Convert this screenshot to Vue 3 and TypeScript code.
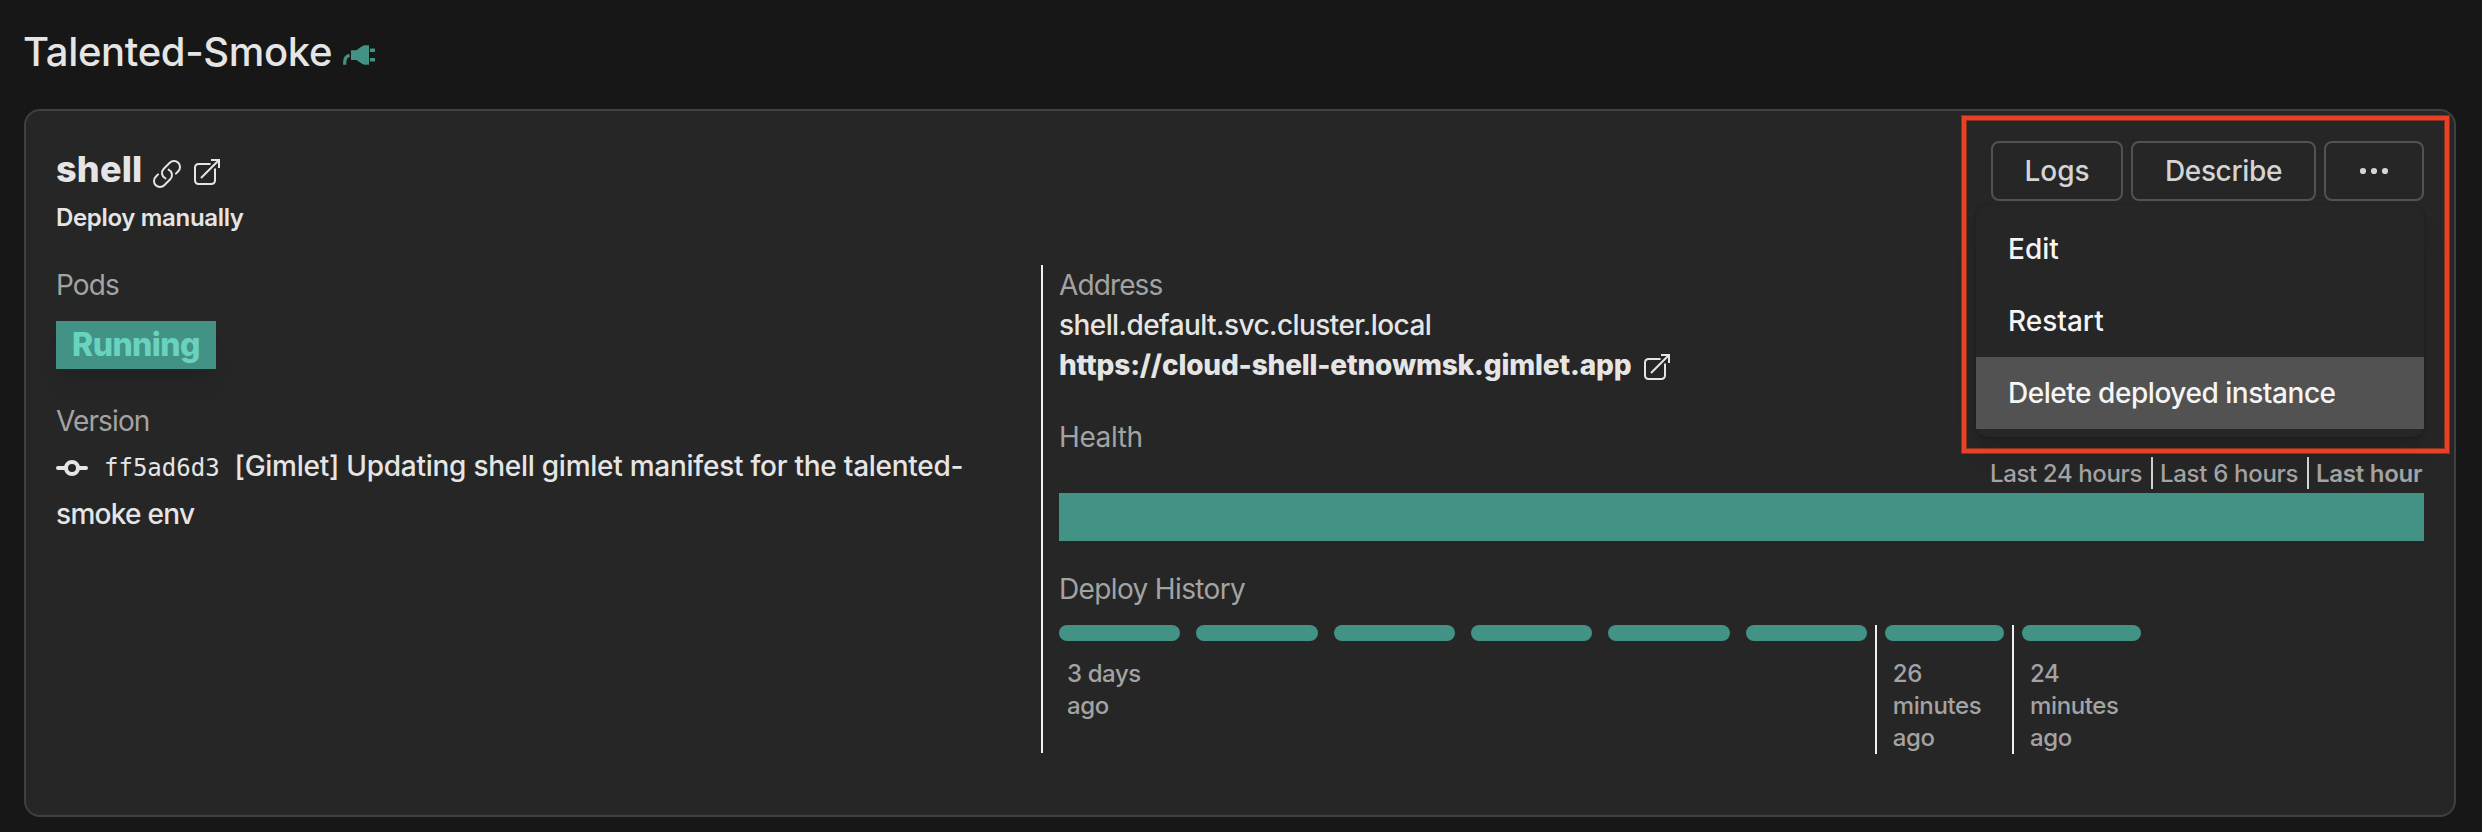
<script setup lang="ts">
interface Deploy {
  id: number
  label: string
  marked: boolean
}

const menuItems = ['Edit', 'Restart', 'Delete deployed instance'] as const
const activeItem = 'Delete deployed instance'

const ranges = [
  { label: 'Last 24 hours', cls: 'range-day' },
  { label: 'Last 6 hours', cls: 'range-six' },
  { label: 'Last hour', cls: 'range-hour' },
]

const deploys: Deploy[] = [
  { id: 1, label: '3 days ago', marked: false },
  { id: 2, label: '', marked: false },
  { id: 3, label: '', marked: false },
  { id: 4, label: '', marked: false },
  { id: 5, label: '', marked: false },
  { id: 6, label: '', marked: false },
  { id: 7, label: '26 minutes ago', marked: true },
  { id: 8, label: '24 minutes ago', marked: true },
]
</script>

<template>
  <main class="page">
    <header class="env">
      <h1 class="env-name">Talented-Smoke</h1>
      <svg class="plug" viewBox="0 0 32 20" width="32" height="20" aria-hidden="true">
        <path d="M1.7 19.8V17.4C1.7 13.4 3.6 11 6.6 10.4" fill="none" stroke="currentColor" stroke-width="3.2" />
        <path d="M8 5.2h5.4L19.4.9Q20.6.2 22 .2h4v19.6h-4q-1.4 0-2.6-.7L13.4 15H8z" fill="currentColor" />
        <path d="M27 3.4h5v3.6h-5zM27 13h5v3.6h-5z" fill="currentColor" />
      </svg>
    </header>

    <section class="card">
      <div class="card-head">
        <div>
          <div class="app-row">
            <h2 class="app-name">shell</h2>
            <svg class="icon-link" viewBox="0 0 24 24" width="32" height="32" aria-hidden="true">
              <path
                d="M13.19 8.688a4.5 4.5 0 0 1 1.242 7.244l-4.5 4.5a4.5 4.5 0 0 1-6.364-6.364l1.757-1.757m13.35-.622 1.757-1.757a4.5 4.5 0 0 0-6.364-6.364l-4.5 4.5a4.5 4.5 0 0 0 1.242 7.244"
                fill="none" stroke="currentColor" stroke-width="1.5" stroke-linecap="round" stroke-linejoin="round"
              />
            </svg>
            <svg class="icon-open" viewBox="0 0 26 26" width="26" height="26" aria-hidden="true">
              <path d="M16.5 5H4.5A3.5 3.5 0 0 0 1 8.5v13A3.5 3.5 0 0 0 4.5 25h13a3.5 3.5 0 0 0 3.5-3.5V9.5M7 19 25 1M17 1h8v8" />
            </svg>
          </div>
          <p class="policy">Deploy manually</p>
        </div>

        <div class="actions">
          <button class="btn btn-logs" type="button">Logs</button>
          <button class="btn btn-describe" type="button">Describe</button>
          <button class="btn btn-more" type="button" aria-label="More actions">
            <svg viewBox="0 0 30 8" width="30" height="8" aria-hidden="true">
              <circle cx="4" cy="4" r="3.1" fill="currentColor" />
              <circle cx="15" cy="4" r="3.1" fill="currentColor" />
              <circle cx="26" cy="4" r="3.1" fill="currentColor" />
            </svg>
          </button>
          <ul class="menu">
            <li v-for="item in menuItems" :key="item" class="menu-item" :class="{ active: item === activeItem }">
              {{ item }}
            </li>
          </ul>
        </div>
      </div>

      <div class="details">
        <div class="col-left">
          <h3 class="label t-pods">Pods</h3>
          <span class="status">Running</span>
          <h3 class="label t-version">Version</h3>
          <p class="version"><svg class="commit" viewBox="0 0 32 16" width="32" height="16" aria-hidden="true">
              <circle cx="16" cy="8" r="6" fill="none" stroke="currentColor" stroke-width="4" />
              <path d="M2 8h7M23 8h7" stroke="currentColor" stroke-width="4" stroke-linecap="round" />
            </svg><code class="sha">ff5ad6d3</code><span>[Gimlet] Updating shell gimlet manifest for the talented-<wbr /><span class="tail">smoke env</span></span></p>
        </div>

        <div class="col-right">
          <h3 class="label t-address">Address</h3>
          <p class="host">shell.default.svc.cluster.local</p>
          <p class="url">
            <span>https://cloud-shell-etnowmsk.gimlet.app</span>
            <svg class="icon-open" viewBox="0 0 26 26" width="26" height="26" aria-hidden="true">
              <path d="M16.5 5H4.5A3.5 3.5 0 0 0 1 8.5v13A3.5 3.5 0 0 0 4.5 25h13a3.5 3.5 0 0 0 3.5-3.5V9.5M7 19 25 1M17 1h8v8" />
            </svg>
          </p>
          <h3 class="label t-health">Health</h3>
          <div class="ranges">
            <span v-for="r in ranges" :key="r.label" class="range" :class="r.cls">{{ r.label }}</span>
          </div>
          <div class="health-bar"></div>
          <h3 class="label t-history">Deploy History</h3>
          <div class="history">
            <div v-for="d in deploys" :key="d.id" class="deploy" :class="{ marked: d.marked }">
              <div class="pill"></div>
              <p v-if="d.label" class="when">{{ d.label }}</p>
            </div>
          </div>
        </div>
      </div>

      <div class="highlight"></div>
    </section>
  </main>
</template>

<style>
body {
  background: #171717;
}
</style>

<style scoped>
.page {
  box-sizing: border-box;
  width: 2482px;
  height: 832px;
  padding: 24px 26px 0 24px;
  overflow: hidden;
  background: #171717;
  color: #e5e5e5;
  font-family: Inter, "Liberation Sans", sans-serif;
  font-weight: 500;
}
h1, h2, h3, p, ul {
  margin: 0;
  padding: 0;
}
.env {
  display: flex;
  height: 85px;
}
.env-name {
  width: 320px;
  margin-left: -1px;
  font-size: 40px;
  line-height: 55px;
  font-weight: 550;
  letter-spacing: -0.35px;
  white-space: nowrap;
}
.plug {
  margin-top: 21px;
  color: #439286;
}
.card {
  position: relative;
  box-sizing: border-box;
  height: 708px;
  padding: 30px;
  border: 2px solid #404040;
  border-radius: 16px;
  background: #262626;
}
.card-head {
  display: flex;
  justify-content: space-between;
  height: 124px;
}
.app-row {
  display: flex;
  align-items: flex-start;
  height: 60px;
}
.app-name {
  width: 95px;
  font-size: 36px;
  line-height: 56px;
  font-weight: 800;
  letter-spacing: 0.2px;
}
.icon-link {
  margin-top: 17px;
}
.icon-open {
  flex: none;
  fill: none;
  stroke: currentColor;
  stroke-width: 2;
}
.app-row .icon-open {
  margin: 18px 0 0 11px;
}
.policy {
  font-size: 24px;
  line-height: 33px;
  font-weight: 600;
  letter-spacing: -0.33px;
}
.actions {
  position: relative;
  display: flex;
  gap: 8px;
  height: 60px;
}
.btn {
  display: flex;
  align-items: center;
  justify-content: center;
  box-sizing: border-box;
  height: 60px;
  padding: 0;
  border: 2px solid #525252;
  border-radius: 8px;
  background: transparent;
  color: #d4d4d4;
  font: 500 28px/40px Inter, "Liberation Sans", sans-serif;
}
.btn-logs {
  width: 132px;
}
.btn-describe {
  width: 185px;
  letter-spacing: -0.34px;
}
.btn-more {
  width: 100px;
}
.menu {
  position: absolute;
  z-index: 1;
  top: 64px;
  right: 0;
  width: 448px;
  box-sizing: border-box;
  height: 232px;
  padding: 8px 0;
  border-radius: 12px;
  background: #262626;
  box-shadow: 0 0 0 2px rgba(0, 0, 0, 0.05), 0 20px 30px -6px rgba(0, 0, 0, 0.1), 0 8px 12px -4px rgba(0, 0, 0, 0.1);
  list-style: none;
}
.menu-item {
  padding-left: 32px;
  color: #f5f5f5;
  font-size: 28px;
  line-height: 72px;
}
.menu-item.active {
  background: #525252;
  letter-spacing: -0.46px;
}
.details {
  display: grid;
  grid-template-columns: 985px 1fr;
  height: 488px;
}
.col-left {
  padding-right: 16px;
}
.col-right {
  padding-left: 16px;
  border-left: 2px solid #f0f0f0;
}
.label {
  color: #a3a3a3;
  font-size: 28px;
  line-height: 40px;
  font-weight: 400;
}
.t-pods, .t-version, .t-address {
  letter-spacing: -0.88px;
}
.t-health {
  margin-top: 32px;
  letter-spacing: -0.4px;
}
.t-history {
  margin-top: 28px;
  letter-spacing: -0.64px;
}
.status {
  display: block;
  box-sizing: border-box;
  width: 160px;
  height: 48px;
  margin: 16px 0 32px;
  background: #439286;
  box-shadow: 0 20px 30px -6px rgba(0, 0, 0, 0.05), 0 8px 12px -4px rgba(0, 0, 0, 0.08);
  color: #69d3bf;
  font-size: 32px;
  line-height: 47px;
  font-weight: 800;
  letter-spacing: -0.6px;
  text-align: center;
}
.version {
  margin-top: 1px;
  font-size: 28px;
  line-height: 48px;
  letter-spacing: -0.26px;
}
.commit {
  margin-right: 16px;
}
.sha {
  margin-right: 15px;
  font: 400 24px/24px "DejaVu Sans Mono", monospace;
  letter-spacing: 0;
}
.tail {
  letter-spacing: -0.7px;
  white-space: nowrap;
}
.host {
  font-size: 28px;
  line-height: 40px;
  letter-spacing: -0.58px;
}
.url {
  display: flex;
  height: 40px;
  font-size: 28px;
  line-height: 40px;
  font-weight: 800;
  letter-spacing: -0.17px;
}
.url span {
  width: 585px;
}
.url .icon-open {
  margin: 9px 0 0;
}
.ranges {
  display: flex;
  justify-content: flex-end;
  height: 32px;
  color: #a3a3a3;
  font-size: 24px;
  line-height: 33px;
  white-space: nowrap;
}
.range {
  box-sizing: border-box;
  height: 32px;
}
.range + .range {
  padding-left: 7px;
  border-left: 2px solid #d4d4d4;
}
.range-day {
  width: 161px;
  letter-spacing: -0.37px;
}
.range-six {
  width: 156px;
  letter-spacing: -0.3px;
}
.range-hour {
  width: 117px;
  font-weight: 600;
  letter-spacing: -0.25px;
}
.health-bar {
  height: 48px;
  margin-top: 4px;
  background: #439286;
}
.history {
  display: grid;
  grid-template-columns: repeat(10, 1fr);
  height: 128px;
  margin: 16px 0 0 -8px;
}
.deploy {
  padding: 0 8px;
}
.deploy.marked {
  border-left: 2px solid #f0f0f0;
}
.pill {
  height: 16px;
  border-radius: 8px;
  background: #439286;
}
.when {
  width: 94px;
  margin: 17px 0 0 8px;
  color: #a3a3a3;
  font-size: 24px;
  line-height: 32px;
  letter-spacing: -0.4px;
}
.highlight {
  position: absolute;
  z-index: 2;
  top: 5px;
  left: 1936px;
  width: 479px;
  height: 329px;
  border: 4px solid #ea4025;
  box-shadow: 0 0 0 1px #88321f, inset 0 0 0 1px #88321f;
}
</style>
